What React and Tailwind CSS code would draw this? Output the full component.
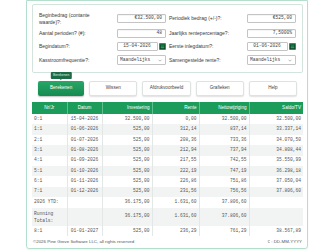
import React from "react";

const rows = [
  ["0:1", "15-04-2026", "32.500,00", "0,00", "32.500,00", "32.500,00"],
  ["1:1", "01-06-2026", "525,00", "312,14", "837,14", "33.337,14"],
  ["2:1", "01-07-2026", "525,00", "208,36", "733,36", "34.070,50"],
  ["3:1", "01-08-2026", "525,00", "212,94", "737,94", "34.808,44"],
  ["4:1", "01-09-2026", "525,00", "217,55", "742,55", "35.550,99"],
  ["5:1", "01-10-2026", "525,00", "222,19", "747,19", "36.298,18"],
  ["6:1", "01-11-2026", "525,00", "226,86", "751,86", "37.050,04"],
  ["7:1", "01-12-2026", "525,00", "231,56", "756,56", "37.806,60"],
];

const mono = { fontFamily: '"Liberation Mono", "DejaVu Sans Mono", monospace' };

function Cal() {
  return (
    <svg width="7" height="7" viewBox="0 0 7 7" className="shrink-0">
      <rect x="0" y="0" width="7" height="7" rx="1" fill="#1f9d57" />
      <rect x="1.3" y="1.8" width="4.4" height="3.9" fill="none" stroke="#0d3b22" strokeWidth="0.7" />
      <line x1="1.3" y1="3" x2="5.7" y2="3" stroke="#0d3b22" strokeWidth="0.6" />
    </svg>
  );
}

function Field({ label, children }) {
  return (
    <div className="flex items-center justify-between">
      <span className="text-[5px] leading-[6.5px] text-[#3a3a3a] w-[70px]">{label}</span>
      {children}
    </div>
  );
}

function Input({ value, w = "w-[49px]" }) {
  return (
    <div
      className={`${w} h-[9px] border border-[#c4c4c4] rounded-[1px] bg-white flex items-center justify-end px-[3px] text-[4.6px] text-[#444] shadow-[inset_0_0.5px_1px_rgba(0,0,0,0.08)]`}
      style={mono}
    >
      {value}
    </div>
  );
}

function DateInput({ value }) {
  return (
    <div className="flex items-center gap-[1.5px]">
      <div
        className="w-[41px] h-[9px] border border-[#c4c4c4] rounded-[1px] bg-white flex items-center justify-center text-[4.6px] text-[#444]"
        style={mono}
      >
        {value}
      </div>
      <Cal />
    </div>
  );
}

function Select({ value }) {
  return (
    <div
      className="w-[49px] h-[10px] border border-[#c4c4c4] rounded-[1px] bg-white flex items-center justify-between pl-[2px] pr-[3px] text-[4.6px] text-[#444]"
      style={mono}
    >
      <span>{value}</span>
      <svg width="4" height="3" viewBox="0 0 4 3">
        <path d="M0.5 0.7 L2 2.2 L3.5 0.7" fill="none" stroke="#777" strokeWidth="0.5" />
      </svg>
    </div>
  );
}

function Btn({ children, primary }) {
  return primary ? (
    <button className="relative flex-1 h-[15px] rounded-[2px] bg-gradient-to-b from-[#26a866] to-[#178a51] text-white text-[4.6px] shadow-[0_1px_1.5px_rgba(0,0,0,0.25)]">
      {children}
      <span className="absolute left-1/2 -translate-x-1/2 -top-[9px] px-[2px] h-[7px] flex items-center rounded-[1px] bg-[#1d6b46] text-[3.4px] text-[#d7efe3] whitespace-nowrap">
        Berekenen
        <span className="absolute left-1/2 -translate-x-1/2 top-[7px] w-0 h-0 border-l-[1.5px] border-r-[1.5px] border-t-[1.5px] border-l-transparent border-r-transparent border-t-[#1d6b46]" />
      </span>
    </button>
  ) : (
    <button className="flex-1 h-[15px] rounded-[2px] bg-white border border-[#dde3e0] text-[#444] text-[4.6px] shadow-[0_1px_1.5px_rgba(0,0,0,0.12)]">
      {children}
    </button>
  );
}

export default function App() {
  const th = "text-white font-normal text-[4.6px] border-r border-[#5cc08d] last:border-r-0 px-[2px]";
  const td = "border-r border-[#e3e8e6] last:border-r-0 px-[2px] text-[4.6px] text-[#555]";
  return (
    <div
      className="w-[334px] h-[251px] bg-white overflow-hidden"
      style={{ fontFamily: '"Liberation Sans", Arial, sans-serif' }}
    >
      <div className="mx-[26px] h-[249px] border border-[#b5dfcd] rounded-b-[3px] pt-[3px] pl-[5px] pr-[4px] flex flex-col shadow-[0_1px_2px_rgba(0,0,0,0.06)]">
        <div className="border border-[#d3e4dc] rounded-[2px] pt-[7px] pb-[7px] px-[6px] grid grid-cols-2 gap-x-[3px] gap-y-[4px]">
          <Field label={<>Beginbedrag (contante<br />waarde)?:</>}>
            <Input value="€32.500,00" />
          </Field>
          <Field label="Periodiek bedrag (+/-)?:">
            <Input value="€525,00" />
          </Field>
          <Field label="Aantal perioden? (#):">
            <Input value="48" />
          </Field>
          <Field label="Jaarlijks rentepercentage?:">
            <Input value="7,5000%" />
          </Field>
          <Field label="Begindatum?:">
            <DateInput value="15-04-2026" />
          </Field>
          <Field label="Eerste inlegdatum?:">
            <DateInput value="01-06-2026" />
          </Field>
          <Field label="Kasstroomfrequentie?:">
            <Select value="Maandelijks" />
          </Field>
          <Field label="Samengestelde rente?:">
            <Select value="Maandelijks" />
          </Field>
        </div>

        <div className="mt-[8px] px-[6px] flex gap-[5px]">
          <Btn primary>Berekenen</Btn>
          <Btn>Wissen</Btn>
          <Btn>Afdrukvoorbeeld</Btn>
          <Btn>Grafieken</Btn>
          <Btn>Help</Btn>
        </div>

        <table className="mt-[6px] w-full table-fixed border-collapse">
          <colgroup>
            <col className="w-[35px]" />
            <col className="w-[35px]" />
            <col className="w-[50px]" />
            <col className="w-[47px]" />
            <col className="w-[50px]" />
            <col className="w-[54px]" />
          </colgroup>
          <thead>
            <tr className="h-[12px] bg-[#1b9c5b]">
              <th className={`${th} text-center`}>Nr/Jr</th>
              <th className={`${th} text-center`}>Datum</th>
              <th className={`${th} text-right`}>Investering</th>
              <th className={`${th} text-right`}>Rente</th>
              <th className={`${th} text-right`}>Nettowijziging</th>
              <th className={`${th} text-right`}>Saldo/TV</th>
            </tr>
          </thead>
          <tbody style={mono}>
            {rows.map((r, i) => (
              <tr key={r[0]} className={`h-[10.4px] ${i % 2 ? "bg-[#f1f4f3]" : "bg-white"}`}>
                <td className={`${td} text-left`}>{r[0]}</td>
                <td className={`${td} text-center`}>{r[1]}</td>
                <td className={`${td} text-right`}>{r[2]}</td>
                <td className={`${td} text-right`}>{r[3]}</td>
                <td className={`${td} text-right`}>{r[4]}</td>
                <td className={`${td} text-right`}>{r[5]}</td>
              </tr>
            ))}
            <tr className="h-[10.4px] bg-white">
              <td className={`${td} text-left whitespace-nowrap`}>2026 YTD:</td>
              <td className={td}></td>
              <td className={`${td} text-right`}>36.175,00</td>
              <td className={`${td} text-right`}>1.631,60</td>
              <td className={`${td} text-right`}>37.806,60</td>
              <td className={td}></td>
            </tr>
            <tr className="h-[18.5px] bg-[#f1f4f3]">
              <td className={`${td} text-left leading-[7px]`}>Running<br />Totals:</td>
              <td className={td}></td>
              <td className={`${td} text-right`}>36.175,00</td>
              <td className={`${td} text-right`}>1.631,60</td>
              <td className={`${td} text-right`}>37.806,60</td>
              <td className={td}></td>
            </tr>
            <tr className="h-[10.4px] bg-white">
              <td className={`${td} text-left`}>8:1</td>
              <td className={`${td} text-center`}>01-01-2027</td>
              <td className={`${td} text-right`}>525,00</td>
              <td className={`${td} text-right`}>236,29</td>
              <td className={`${td} text-right`}>761,29</td>
              <td className={`${td} text-right`}>38.567,89</td>
            </tr>
          </tbody>
        </table>

        <div className="flex-1 flex items-center justify-between px-[1px] text-[4.4px] text-[#555]">
          <span>©2026 Pine Grove Software LLC, all rights reserved</span>
          <span>€ : DD-MM-YYYY</span>
        </div>
      </div>
    </div>
  );
}
